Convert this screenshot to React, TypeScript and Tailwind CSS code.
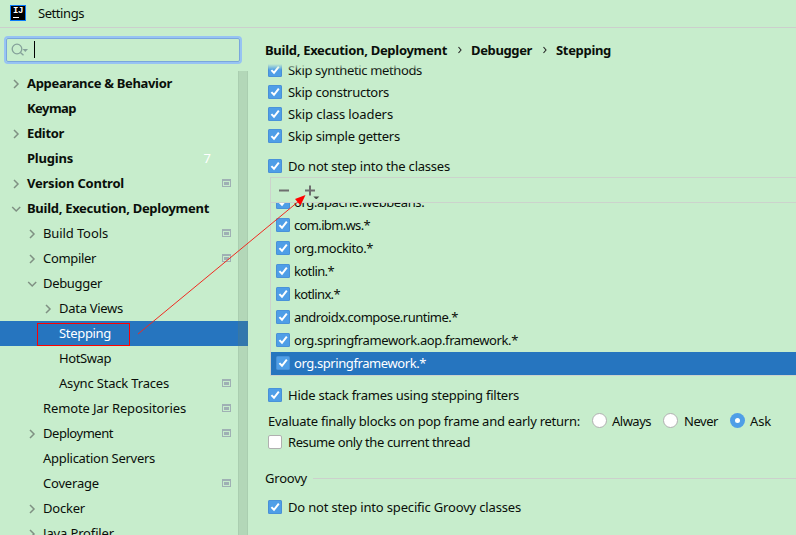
import { useLayoutEffect, useRef, useState } from "react";
import clsx from "clsx";

/** Single line of text tracked so that it spans exactly `w` pixels. */
function Label({ w, className, children }: { w: number; className?: string; children: string }) {
  const ref = useRef<HTMLSpanElement>(null);
  const [spacing, setSpacing] = useState(0);
  useLayoutEffect(() => {
    if (ref.current) {
      const natural = ref.current.getBoundingClientRect().width;
      setSpacing((w - natural) / children.length);
    }
  }, []);
  return (
    <span
      ref={ref}
      className={clsx("inline-block shrink-0 whitespace-pre", className)}
      style={{ letterSpacing: spacing }}
    >
      {children}
    </span>
  );
}

function Check({ on = true }: { on?: boolean }) {
  if (!on) return <span className="h-3.5 w-3.5 shrink-0 rounded-xs border border-[#b0b0b0] bg-white" />;
  return (
    <svg className="h-3.5 w-3.5 shrink-0" viewBox="0 0 14 14" fill="none">
      <rect width="14" height="14" rx="1.5" fill="#4587cc" />
      <rect x="0.6" y="0.6" width="12.8" height="12.8" rx="1.2" fill="#4f9ee7" />
      <path d="M3.4 7.1 L6 9.8 L10.8 3.6" stroke="#fff" strokeWidth="2" />
    </svg>
  );
}

function Radio({ on = false }: { on?: boolean }) {
  return (
    <span
      className={clsx(
        "flex h-[15px] w-[15px] shrink-0 items-center justify-center rounded-full",
        on ? "bg-[#4f9ee7]" : "border border-[#b0b0b0] bg-white",
      )}
    >
      {on && <span className="h-[5px] w-[5px] rounded-full bg-white" />}
    </span>
  );
}

function Arrow({ open }: { open: boolean }) {
  return (
    <svg className="h-3 w-3 shrink-0" viewBox="0 0 12 12" fill="none" stroke="#7f9083" strokeWidth="1.5">
      <path d={open ? "M2.2 4 L6.2 8 L10.2 4" : "M4 2 L8 6 L4 10"} />
    </svg>
  );
}

function ProjectMark() {
  return (
    <svg className="mb-px h-2 w-[9px] shrink-0" viewBox="0 0 9 8" shapeRendering="crispEdges">
      <path d="M0 0H9V8H0ZM1 2V7H8V2Z" fill="#9fb0b4" fillRule="evenodd" />
      <rect x="2" y="3" width="5" height="3" fill="#9fb0b4" />
    </svg>
  );
}

type Node = { text: string; w: number; level: 0 | 1 | 2; arrow?: "open" | "closed"; mark?: boolean; count?: string; selected?: boolean };

const tree: Node[] = [
  { text: "Appearance & Behavior", w: 145, level: 0, arrow: "closed" },
  { text: "Keymap", w: 49, level: 0 },
  { text: "Editor", w: 37, level: 0, arrow: "closed" },
  { text: "Plugins", w: 46, level: 0, count: "7" },
  { text: "Version Control", w: 97, level: 0, arrow: "closed", mark: true },
  { text: "Build, Execution, Deployment", w: 182, level: 0, arrow: "open" },
  { text: "Build Tools", w: 65, level: 1, arrow: "closed", mark: true },
  { text: "Compiler", w: 53, level: 1, arrow: "closed", mark: true },
  { text: "Debugger", w: 59, level: 1, arrow: "open" },
  { text: "Data Views", w: 64, level: 2, arrow: "closed" },
  { text: "Stepping", w: 52, level: 2, selected: true },
  { text: "HotSwap", w: 52, level: 2 },
  { text: "Async Stack Traces", w: 110, level: 2, mark: true },
  { text: "Remote Jar Repositories", w: 143, level: 1, mark: true },
  { text: "Deployment", w: 70, level: 1, arrow: "closed", mark: true },
  { text: "Application Servers", w: 112, level: 1 },
  { text: "Coverage", w: 56, level: 1, mark: true },
  { text: "Docker", w: 42, level: 1, arrow: "closed" },
  { text: "Java Profiler", w: 71, level: 1, arrow: "closed" },
];

const indent = { 0: "pl-[10px]", 1: "pl-[26px]", 2: "pl-[42px]" };

function TreeRow({ node }: { node: Node }) {
  return (
    <div
      className={clsx(
        "flex h-[25px] shrink-0 items-center pr-[17px]",
        indent[node.level],
        node.selected && "bg-[#2675bf] text-white",
      )}
    >
      <span className="flex w-[17px] shrink-0">{node.arrow && <Arrow open={node.arrow === "open"} />}</span>
      <Label w={node.w} className={clsx("pb-0.5", node.level === 0 && "font-bold")}>
        {node.text}
      </Label>
      <span className="grow" />
      {node.count && <span className="pb-0.5 pr-5 text-white">{node.count}</span>}
      {node.mark && <ProjectMark />}
    </div>
  );
}

const skips = [
  { text: "Skip synthetic methods", w: 134 },
  { text: "Skip constructors", w: 101 },
  { text: "Skip class loaders", w: 105 },
  { text: "Skip simple getters", w: 112 },
];

const classes = [
  { text: "org.apache.webbeans.*", w: 137 },
  { text: "com.ibm.ws.*", w: 76 },
  { text: "org.mockito.*", w: 79 },
  { text: "kotlin.*", w: 40 },
  { text: "kotlinx.*", w: 46 },
  { text: "androidx.compose.runtime.*", w: 164 },
  { text: "org.springframework.aop.framework.*", w: 224 },
  { text: "org.springframework.*", w: 132, selected: true },
];

function Option({ text, w, on }: { text: string; w: number; on?: boolean }) {
  return (
    <div className="flex h-[22px] shrink-0 items-center gap-1.5 pl-[3px]">
      <Check on={on} />
      <Label w={w}>{text}</Label>
    </div>
  );
}

function Crumb() {
  return (
    <svg className="ml-[11px] mr-[9px] h-2 w-1" viewBox="0 0 4 8" fill="none" stroke="#222" strokeWidth="1.1">
      <path d="M0.5 1 L3 4 L0.5 7" />
    </svg>
  );
}

export default function App() {
  return (
    <div className="relative flex h-[535px] w-[796px] flex-col overflow-hidden bg-[#c7edcc] font-['Noto_Sans','Open_Sans',sans-serif] text-[13px] leading-[18px] text-[#0a0f0a]">
      <header className="flex h-7 shrink-0 items-center border-b border-[#cccfcc] pl-[10px]">
        <div className="mb-px flex h-4 w-4 flex-col border border-[#087cfa] bg-black pl-0.5 pt-px">
          <span className="font-['Liberation_Mono',monospace] text-[9px] font-bold leading-[8px] tracking-[-0.5px] text-white">IJ</span>
          <span className="mt-0.5 h-px w-1.5 bg-white" />
        </div>
        <Label w={46} className="ml-3 pb-0.5">Settings</Label>
      </header>

      <div className="flex min-h-0 grow">
        <aside className="flex w-[248px] shrink-0 flex-col">
          <div className="ml-1 mt-2 flex h-7 w-[238px] shrink-0 items-center rounded-[4px] border-2 border-[#97c3f3]">
            <div className="flex h-full w-full items-center rounded-xs border border-[#7aa7dc] pl-1">
              <svg className="h-4 w-[18px]" viewBox="0 0 18 16" fill="none">
                <circle cx="6" cy="7" r="4.8" stroke="#85a19a" strokeWidth="1.3" />
                <path d="M9.4 10.4 L12.5 13.3" stroke="#85a19a" strokeWidth="1.4" />
                <path d="M11.5 7 H17 L14.3 10 Z" fill="#85a19a" />
              </svg>
              <span className="mb-px ml-[5px] h-[17px] w-px bg-black" />
            </div>
          </div>
          <div className="relative mt-[7px] flex min-h-0 grow flex-col overflow-hidden">
            <div className="flex flex-col">
              {tree.map((n) => <TreeRow key={n.text} node={n} />)}
            </div>
            <div className="absolute inset-y-0 right-0 w-[10px] border-x border-[#66806a]/10 bg-[#66806a]/20" />
          </div>
        </aside>

        <main className="flex min-w-0 grow flex-col pl-[17px]">
          <nav className="flex h-9 shrink-0 items-center pt-[7px] font-bold">
            <Label w={182}>Build, Execution, Deployment</Label>
            <Crumb />
            <Label w={61}>Debugger</Label>
            <Crumb />
            <Label w={55}>Stepping</Label>
          </nav>
          <div className="relative flex shrink-0 flex-col overflow-hidden">
            <div className="-mt-[5px] flex flex-col">
              {skips.map((s) => <Option key={s.text} {...s} />)}
            </div>
            <div className="absolute inset-x-0 top-0 h-1.5 bg-gradient-to-b from-[#c7edcc] to-transparent" />
          </div>
          <div className="mt-2 flex flex-col">
            <Option text="Do not step into the classes" w={162} />
          </div>

          <section className="ml-[5px] flex h-[199px] shrink-0 flex-col border-y border-l border-[#ccd3cc]">
            <div className="flex h-[25px] shrink-0 items-center border-b border-[#ccd3cc] pl-2">
              <svg className="h-[17px] w-11" viewBox="0 0 44 17" fill="none">
                <path d="M0 8.5H10M26 8.5H36M31 3.5V13.5" stroke="#6e6e6e" strokeWidth="2" />
                <path d="M34.3 14.5H40.3L37.3 17.5Z" fill="#4b504b" />
              </svg>
            </div>
            <div className="flex min-h-0 grow flex-col justify-end overflow-hidden">
              {classes.map((c) => (
                <div
                  key={c.text}
                  className={clsx("flex h-[23px] shrink-0 items-center gap-1 pl-[5px]", c.selected && "bg-[#2675bf] text-white")}
                >
                  <span className="pb-px"><Check /></span>
                  <Label w={c.w} className="pb-0.5">{c.text}</Label>
                </div>
              ))}
            </div>
          </section>

          <div className="mt-2 flex flex-col">
            <Option text="Hide stack frames using stepping filters" w={231} />
          </div>
          <div className="mt-[3px] flex h-[23px] shrink-0 items-center pl-[3px]">
            <Label w={312}>Evaluate finally blocks on pop frame and early return:</Label>
            <span className="ml-3 flex items-center gap-[5px]"><Radio /><Label w={39}>Always</Label></span>
            <span className="ml-3 flex items-center gap-[6px]"><Radio /><Label w={34}>Never</Label></span>
            <span className="ml-3 flex items-center gap-[5px]"><Radio on /><Label w={21}>Ask</Label></span>
          </div>
          <div className="-mt-px flex flex-col">
            <Option text="Resume only the current thread" w={182} on={false} />
          </div>
          <div className="mt-4 flex h-[18px] shrink-0 items-center gap-[6px]">
            <Label w={42}>Groovy</Label>
            <span className="h-px grow bg-[#ccd0cc]" />
          </div>
          <div className="mt-[9px] flex flex-col">
            <Option text="Do not step into specific Groovy classes" w={233} />
          </div>
        </main>
      </div>

      {/* Annotation: frame round the selected page and an arrow to the add button */}
      <svg className="pointer-events-none absolute inset-0 h-full w-full" viewBox="0 0 796 535" fill="none">
        <rect x="37.5" y="323.5" width="92" height="22" stroke="#ff0000" />
        <path d="M138 334 L299 201" stroke="#f02a20" />
        <path d="M305.5 195 L295 199 L300.5 205.5 Z" fill="#ff0000" />
      </svg>
    </div>
  );
}
